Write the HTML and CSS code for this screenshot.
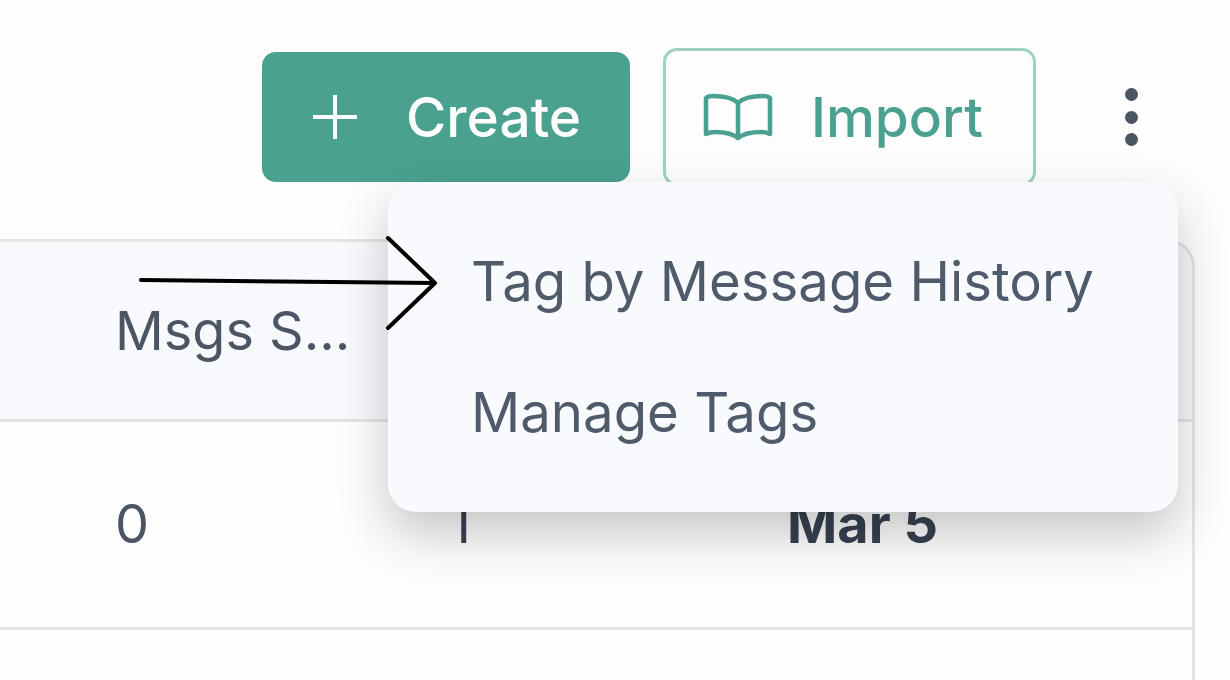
FILE: index.html
```html
<!DOCTYPE html>
<html lang="en">
<head>
<meta charset="utf-8">
<title>Contacts</title>
<link rel="stylesheet" href="styles.css">
</head>
<body>
<div class="page">
  <header class="toolbar">
    <button class="btn btn-create">
      <svg class="icon-plus" viewBox="0 0 46 46"><path d="M23 1v44M1 23h44"/></svg>
      <span>Create</span>
    </button>
    <button class="btn btn-import">
      <svg class="icon-book" viewBox="0 0 70 50"><path d="M35 11C30 6 22 4 10 4C7 4 4 5 3 6V42C5 41 8 40 12 40C22 40 30 42 35 46C40 42 48 40 58 40C62 40 65 41 67 42V6C66 5 63 4 60 4C48 4 40 6 35 11ZM35 11V46"/></svg>
      <span>Import</span>
    </button>
    <div class="kebab"><i></i><i></i><i></i></div>
  </header>
  <section class="table">
    <div class="row row-head"><div class="cell cell-msgs">Msgs S...</div></div>
    <div class="row row-body">
      <div class="cell cell-msgs">0</div>
      <div class="cell cell-one">1</div>
      <div class="cell cell-date">Mar 5</div>
    </div>
    <div class="row row-empty"></div>
  </section>
  <nav class="menu">
    <a class="menu-item">Tag by Message History</a>
    <a class="menu-item">Manage Tags</a>
  </nav>
  <svg class="arrow" viewBox="0 0 1230 680"><path d="M141 280L435 283M388 238L435 283L388 328"/></svg>
</div>
</body>
</html>
```
FILE: styles.css
```css
* { box-sizing: border-box; }
html, body { margin: 0; padding: 0; }
body { width: 1230px; height: 680px; overflow: hidden; background: #fdfdfd; font-family: Inter, "Liberation Sans", sans-serif; color: #4b5563; }
.page { position: relative; width: 1230px; height: 680px; overflow: hidden; padding-top: 48px; }
.toolbar { display: flex; align-items: center; height: 138px; padding-left: 262px; }
.btn { display: flex; align-items: center; font: inherit; font-size: 55px; font-weight: 500; background: none; cursor: pointer; border-radius: 14px; }
.btn-create { width: 368px; height: 130px; border: 0; background: #4aa18f; color: #fff; padding-left: 50px; gap: 48px; }
.btn-import { width: 373px; height: 138px; margin-left: 33px; border: 3px solid #9fd0c5; color: #4aa18f; padding-left: 37px; gap: 38px; }
.icon-plus { width: 46px; height: 46px; flex: none; fill: none; stroke: #fff; stroke-width: 4; }
.icon-book { width: 70px; height: 50px; flex: none; fill: none; stroke: #4aa18f; stroke-width: 4.5; stroke-linejoin: round; stroke-linecap: round; }
.kebab { display: flex; flex-direction: column; gap: 9.5px; margin-left: 89px; }
.kebab i { display: block; width: 13px; height: 13px; border-radius: 50%; background: #4b5563; }
.table { width: 1195px; margin-top: 53px; border-top: 3px solid #e4e4e4; border-right: 3px solid #e4e4e4; border-top-right-radius: 28px; }
.row { display: flex; align-items: center; position: relative; border-bottom: 3px solid #e4e4e4; }
.row-head { height: 180px; background: #f8f9fd; border-top-right-radius: 26px; }
.row-body { height: 208px; padding-bottom: 2px; }
.row-empty { height: 60px; border-bottom: 0; }
.cell { font-size: 54px; white-space: nowrap; }
.cell-msgs { width: 449px; padding-left: 115px; }
.cell-one { width: 338px; color: #374151; clip-path: inset(0 0 0 9px); }
.cell-date { font-weight: 700; color: #374151; }
.menu { position: absolute; left: 388px; top: 182px; width: 790px; height: 330px; padding-top: 34px; background: #f9fafe; border-radius: 28px; box-shadow: 0 22px 50px rgba(0,0,0,.22); display: flex; flex-direction: column; }
.menu-item { display: block; height: 131px; line-height: 131px; padding-left: 83px; font-size: 54.5px; color: #4f5b6b; }
.arrow { position: absolute; left: 0; top: 0; width: 1230px; height: 680px; fill: none; stroke: #000; stroke-width: 4; stroke-linecap: round; stroke-linejoin: round; }
```
